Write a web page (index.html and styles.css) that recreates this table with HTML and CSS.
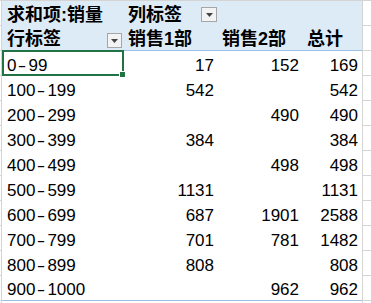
FILE: index.html
```html
<!DOCTYPE html>
<html lang="zh">
<head>
<meta charset="utf-8">
<title>数据透视表</title>
<link rel="stylesheet" href="styles.css">
</head>
<body>
<div class="sheet">
  <div class="row">
    <div class="stub"></div>
    <div class="c h">求和项:销量</div>
    <div class="c h split"><span>列标签</span><span class="flt flt1"><svg width="7" height="4" viewBox="0 0 7 4"><polygon points="0,0 7,0 3.5,4" fill="#444"/></svg></span></div>
    <div class="c h"></div>
    <div class="c h"></div>
    <div class="ext"></div>
  </div>
  <div class="row">
    <div class="stub"></div>
    <div class="c h hb split"><span>行标签</span><span class="flt flt2"><svg width="7" height="4" viewBox="0 0 7 4"><polygon points="0,0 7,0 3.5,4" fill="#444"/></svg></span></div>
    <div class="c h hb">销售1部</div>
    <div class="c h hb">销售2部</div>
    <div class="c h hb">总计</div>
    <div class="ext"></div>
  </div>
  <div class="row">
    <div class="stub"></div>
    <div class="c lbl sel-cell">0<span class="d">-</span>99<div class="sel"><div class="handle"></div></div></div>
    <div class="c v">17</div>
    <div class="c v">152</div>
    <div class="c v">169</div>
    <div class="ext"></div>
  </div>
  <div class="row">
    <div class="stub"></div>
    <div class="c lbl">100<span class="d">-</span>199</div>
    <div class="c v">542</div>
    <div class="c v"></div>
    <div class="c v">542</div>
    <div class="ext"></div>
  </div>
  <div class="row">
    <div class="stub"></div>
    <div class="c lbl">200<span class="d">-</span>299</div>
    <div class="c v"></div>
    <div class="c v">490</div>
    <div class="c v">490</div>
    <div class="ext"></div>
  </div>
  <div class="row">
    <div class="stub"></div>
    <div class="c lbl">300<span class="d">-</span>399</div>
    <div class="c v">384</div>
    <div class="c v"></div>
    <div class="c v">384</div>
    <div class="ext"></div>
  </div>
  <div class="row">
    <div class="stub"></div>
    <div class="c lbl">400<span class="d">-</span>499</div>
    <div class="c v"></div>
    <div class="c v">498</div>
    <div class="c v">498</div>
    <div class="ext"></div>
  </div>
  <div class="row">
    <div class="stub"></div>
    <div class="c lbl">500<span class="d">-</span>599</div>
    <div class="c v">1131</div>
    <div class="c v"></div>
    <div class="c v">1131</div>
    <div class="ext"></div>
  </div>
  <div class="row">
    <div class="stub"></div>
    <div class="c lbl">600<span class="d">-</span>699</div>
    <div class="c v">687</div>
    <div class="c v">1901</div>
    <div class="c v">2588</div>
    <div class="ext"></div>
  </div>
  <div class="row">
    <div class="stub"></div>
    <div class="c lbl">700<span class="d">-</span>799</div>
    <div class="c v">701</div>
    <div class="c v">781</div>
    <div class="c v">1482</div>
    <div class="ext"></div>
  </div>
  <div class="row">
    <div class="stub"></div>
    <div class="c lbl">800<span class="d">-</span>899</div>
    <div class="c v">808</div>
    <div class="c v"></div>
    <div class="c v">808</div>
    <div class="ext"></div>
  </div>
  <div class="row last">
    <div class="stub"></div>
    <div class="c lbl">900<span class="d">-</span>1000</div>
    <div class="c v"></div>
    <div class="c v">962</div>
    <div class="c v">962</div>
    <div class="ext"></div>
  </div>
  <div class="row tail">
    <div class="stub"></div>
    <div class="c"></div>
    <div class="c"></div>
    <div class="c"></div>
    <div class="c"></div>
    <div class="ext"></div>
  </div>
</div>
</body>
</html>
```

FILE: styles.css
```css
html, body {
  margin: 0;
  padding: 0;
  background: #fff;
}
body {
  width: 371px;
  height: 303px;
  overflow: hidden;
  font-family: "Liberation Sans", "Noto Sans CJK SC", sans-serif;
  color: #000;
}
.sheet {
  border-top: 1px solid #d4d4d4;
  display: flex;
  flex-direction: column;
}
.row {
  display: grid;
  grid-template-columns: 2px 122px 94px 85px 59px 1fr;
  height: 25px;
}
.row.tail {
  height: 2px;
}
.stub {
  box-sizing: border-box;
  border-right: 1px solid #d4d4d4;
  border-bottom: 1px solid #d4d4d4;
}
.tail .stub,
.tail .ext {
  border-bottom: 0;
}
.ext {
  box-sizing: border-box;
  border-left: 1px solid #d4d4d4;
  border-bottom: 1px solid #d4d4d4;
}
.c {
  box-sizing: border-box;
  display: flex;
  align-items: flex-end;
  padding: 0 4px;
  font-size: 17px;
  line-height: normal;
  white-space: nowrap;
  background: #fff;
}
.h {
  background: #ddebf7;
  font-size: 18px;
  font-weight: bold;
  line-height: 22px;
}
.hb {
  border-bottom: 1px solid #9bc2e6;
}
.row:nth-child(1) .h:nth-child(2),
.row:nth-child(2) .h:nth-child(2) {
  padding-left: 5px;
}
.split {
  justify-content: space-between;
  padding-right: 1px;
}
.row:nth-child(2) .split {
  padding-right: 2px;
}
.flt {
  box-sizing: border-box;
  width: 16px;
  height: 15px;
  border: 1px solid #a6a6a6;
  background: #f3f3f3;
  display: flex;
  align-items: center;
  justify-content: center;
}
.flt1 {
  margin-bottom: 4px;
}
.flt2 {
  width: 15px;
  margin-bottom: 2px;
}
.lbl {
  padding-left: 5px;
}
.d {
  display: inline-block;
  width: 12px;
  text-align: center;
  transform: scaleX(1.5);
}
.v {
  justify-content: flex-end;
}
.last .c {
  border-bottom: 1px solid #9bc2e6;
}
.sel-cell {
  position: relative;
}
.sel {
  position: absolute;
  top: -1px;
  left: 0;
  right: 0;
  bottom: 0;
  border: 2px solid #217346;
}
.handle {
  position: absolute;
  right: -4px;
  bottom: -4px;
  width: 5px;
  height: 5px;
  background: #217346;
  border: 1px solid #fff;
}
```
